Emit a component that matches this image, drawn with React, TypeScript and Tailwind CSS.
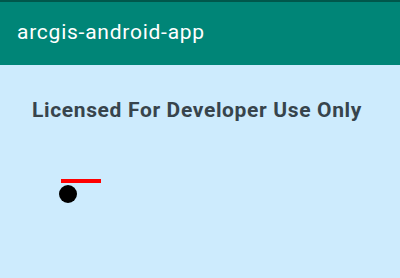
export default function App() {
  return (
    <div className="flex h-[278px] w-[400px] flex-col bg-[#cdebfd] font-['Roboto',sans-serif]">
      {/* app bar */}
      <div className="flex h-[65px] flex-col bg-[#008577]">
        <div className="h-[2px] bg-[#00574b]" />
        <div className="flex flex-1 items-center px-[17px] pb-[2px] text-[21px] tracking-[0.75px] text-white">arcgis-android-app</div>
      </div>
      {/* map view */}
      <div className="flex flex-1 flex-col">
        <div className="mt-[30px] pr-[6px] text-center text-[21px] font-bold tracking-[0.65px] text-[#37444c]">Licensed For Developer Use Only</div>
        <div className="ml-[61px] mt-[52px] h-[4px] w-[40px] bg-[#ff0000]" />
        <div className="ml-[59px] mt-[2px] h-[18px] w-[18px] rounded-full bg-black" />
      </div>
    </div>
  );
}
